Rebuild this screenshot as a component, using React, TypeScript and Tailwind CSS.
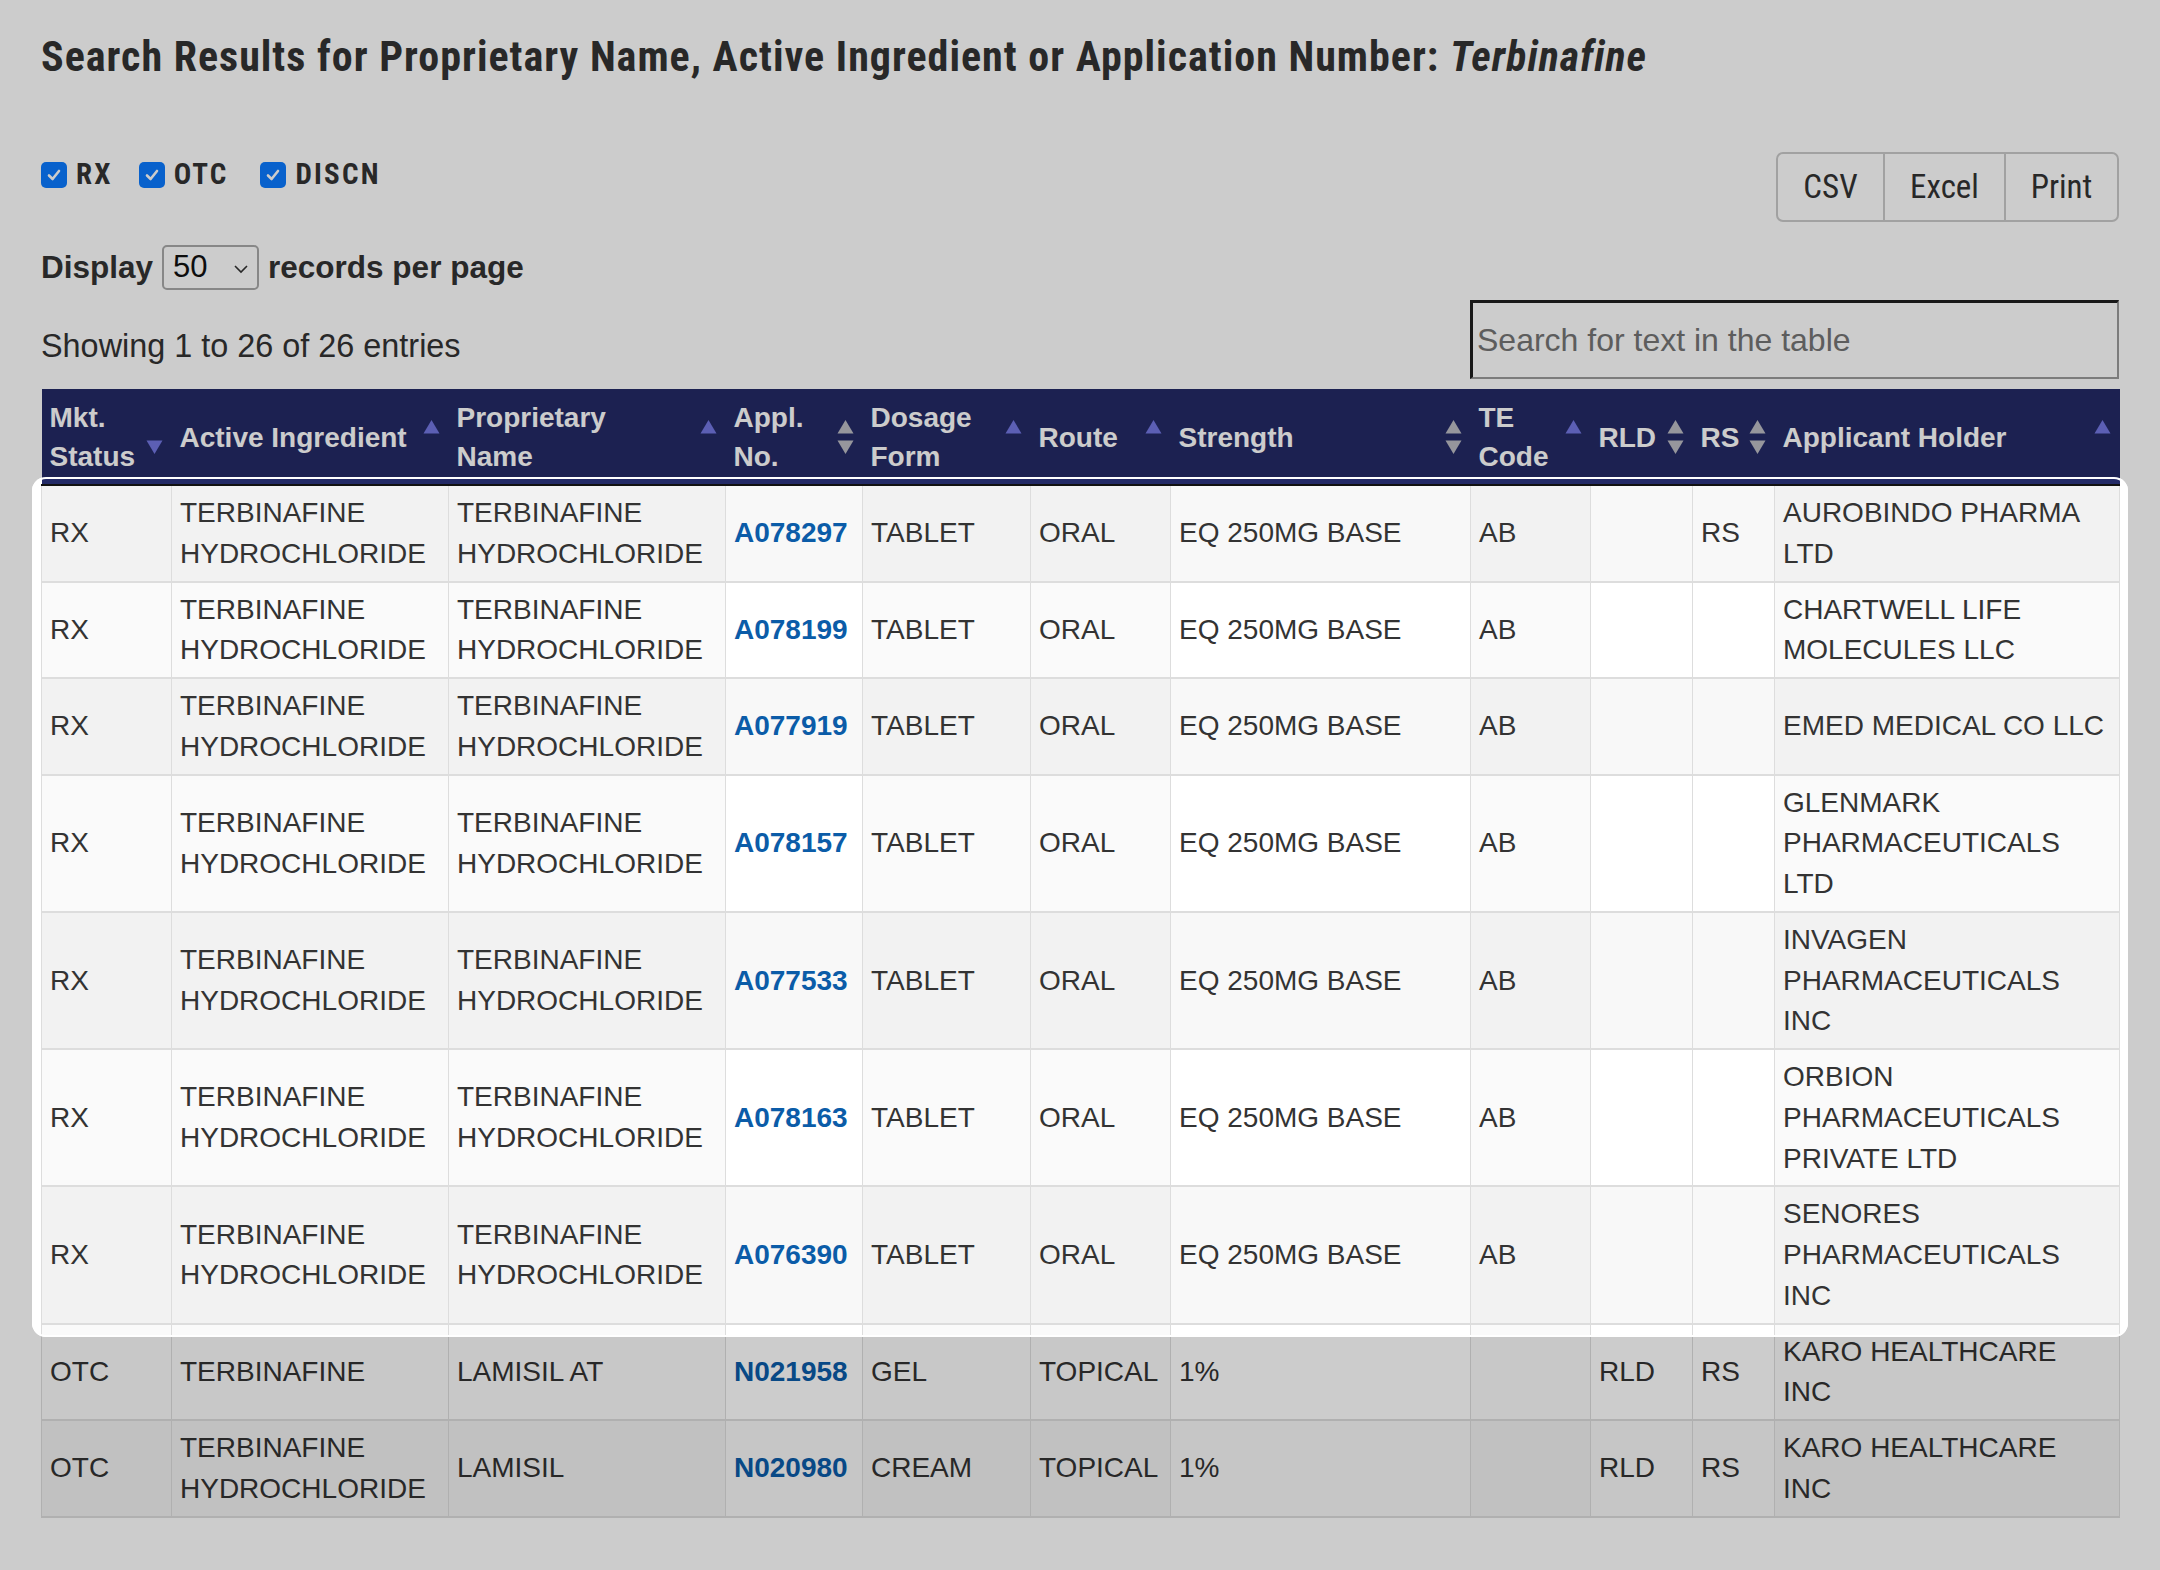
import React from 'react';

const COND = "font-['Roboto_Condensed','Liberation_Sans_Narrow','DejaVu_Sans_Condensed',sans-serif]";

type Sort = 'up' | 'down' | 'both';

function SortIcon({ type }: { type: Sort }) {
  const lav = '#7377e2';
  const grey = '#bcbcc4';
  return (
    <svg
      className="absolute right-[9px] top-1/2 -translate-y-1/2"
      width="17"
      height="36"
      viewBox="0 0 17 36"
    >
      {(type === 'up' || type === 'both') && (
        <polygon points="8.5,1 16.5,14.5 0.5,14.5" fill={type === 'both' ? grey : lav} />
      )}
      {(type === 'down' || type === 'both') && (
        <polygon points="0.5,21.5 16.5,21.5 8.5,35" fill={type === 'both' ? grey : lav} />
      )}
    </svg>
  );
}

function Lines({ lines }: { lines: string[] }) {
  return (
    <>
      {lines.map((l, i) => (
        <React.Fragment key={i}>
          {i > 0 && <br />}
          {l}
        </React.Fragment>
      ))}
    </>
  );
}

function Check({ label, className }: { label: string; className: string }) {
  return (
    <label className={`flex items-center ${className}`}>
      <span className="flex h-[26px] w-[26px] items-center justify-center rounded-[5px] bg-[#0a7aff]">
        <svg width="18" height="18" viewBox="0 0 18 18">
          <path
            d="M4 9.5 L7.6 13 L14 5"
            stroke="white"
            strokeWidth="2.6"
            fill="none"
            strokeLinecap="round"
            strokeLinejoin="round"
          />
        </svg>
      </span>
      <span className={`ml-[9px] text-[29px] font-bold tracking-[2.2px] text-[#333] ${COND}`}>{label}</span>
    </label>
  );
}

const headers: { l: string[]; s: Sort }[] = [
  { l: ['Mkt.', 'Status'], s: 'down' },
  { l: ['Active Ingredient'], s: 'up' },
  { l: ['Proprietary', 'Name'], s: 'up' },
  { l: ['Appl.', 'No.'], s: 'both' },
  { l: ['Dosage', 'Form'], s: 'up' },
  { l: ['Route'], s: 'up' },
  { l: ['Strength'], s: 'both' },
  { l: ['TE', 'Code'], s: 'up' },
  { l: ['RLD'], s: 'both' },
  { l: ['RS'], s: 'both' },
  { l: ['Applicant Holder'], s: 'up' },
];

const colWidths = [
  'w-[130px]',
  'w-[277px]',
  'w-[277px]',
  'w-[137px]',
  'w-[168px]',
  'w-[140px]',
  'w-[300px]',
  'w-[120px]',
  'w-[102px]',
  'w-[82px]',
  'w-[345px]',
];

type Row = {
  ms: string;
  ai: string[];
  pn: string[];
  ap: string;
  df: string;
  rt: string;
  st: string;
  te: string;
  rld: string;
  rs: string;
  ah: string[];
};

const TH = ['TERBINAFINE', 'HYDROCHLORIDE'];

const rows: Row[] = [
  { ms: 'RX', ai: TH, pn: TH, ap: 'A078297', df: 'TABLET', rt: 'ORAL', st: 'EQ 250MG BASE', te: 'AB', rld: '', rs: 'RS', ah: ['AUROBINDO PHARMA', 'LTD'] },
  { ms: 'RX', ai: TH, pn: TH, ap: 'A078199', df: 'TABLET', rt: 'ORAL', st: 'EQ 250MG BASE', te: 'AB', rld: '', rs: '', ah: ['CHARTWELL LIFE', 'MOLECULES LLC'] },
  { ms: 'RX', ai: TH, pn: TH, ap: 'A077919', df: 'TABLET', rt: 'ORAL', st: 'EQ 250MG BASE', te: 'AB', rld: '', rs: '', ah: ['EMED MEDICAL CO LLC'] },
  { ms: 'RX', ai: TH, pn: TH, ap: 'A078157', df: 'TABLET', rt: 'ORAL', st: 'EQ 250MG BASE', te: 'AB', rld: '', rs: '', ah: ['GLENMARK', 'PHARMACEUTICALS', 'LTD'] },
  { ms: 'RX', ai: TH, pn: TH, ap: 'A077533', df: 'TABLET', rt: 'ORAL', st: 'EQ 250MG BASE', te: 'AB', rld: '', rs: '', ah: ['INVAGEN', 'PHARMACEUTICALS', 'INC'] },
  { ms: 'RX', ai: TH, pn: TH, ap: 'A078163', df: 'TABLET', rt: 'ORAL', st: 'EQ 250MG BASE', te: 'AB', rld: '', rs: '', ah: ['ORBION', 'PHARMACEUTICALS', 'PRIVATE LTD'] },
  { ms: 'RX', ai: TH, pn: TH, ap: 'A076390', df: 'TABLET', rt: 'ORAL', st: 'EQ 250MG BASE', te: 'AB', rld: '', rs: '', ah: ['SENORES', 'PHARMACEUTICALS', 'INC'] },
  { ms: 'OTC', ai: ['TERBINAFINE'], pn: ['LAMISIL AT'], ap: 'N021958', df: 'GEL', rt: 'TOPICAL', st: '1%', te: '', rld: 'RLD', rs: 'RS', ah: ['KARO HEALTHCARE', 'INC'] },
  { ms: 'OTC', ai: TH, pn: ['LAMISIL'], ap: 'N020980', df: 'CREAM', rt: 'TOPICAL', st: '1%', te: '', rld: 'RLD', rs: 'RS', ah: ['KARO HEALTHCARE', 'INC'] },
];

const sortedCols = [true, true, true, false, true, true, false, true, false, false, true];

export default function App() {
  return (
    <div className="relative h-[1570px] w-full overflow-hidden bg-white font-['Liberation_Sans',Arial,sans-serif] text-[#333]">
      <div className="px-[41px]">
        <h1 className={`pt-[33px] text-[42px] font-bold leading-[48px] tracking-[1px] text-[#333] ${COND}`}>
          Search Results for Proprietary Name, Active Ingredient or Application Number: <i>Terbinafine</i>
        </h1>

        <div className="mt-[71px] flex h-[70px] items-start justify-between">
          <div className="flex items-center pt-[1px]">
            <Check label="RX" className="mr-[26px]" />
            <Check label="OTC" className="mr-[32px]" />
            <Check label="DISCN" className="" />
          </div>
          <div className={`flex h-[70px] overflow-hidden rounded-[7px] border-2 border-[#cacaca] bg-white text-[33px] text-[#333] ${COND}`}>
            <div className="flex w-[105px] items-center justify-center">CSV</div>
            <div className="flex w-[121px] items-center justify-center border-l-2 border-[#cacaca]">Excel</div>
            <div className="flex w-[113px] items-center justify-center border-l-2 border-[#cacaca]">Print</div>
          </div>
        </div>

        <div className="mt-[23px] flex h-[45px] items-center text-[31.5px] font-bold text-[#333]">
          <span>Display</span>
          <div className="relative ml-[9px] mr-[9px] flex h-[45px] w-[97px] items-center rounded-[5px] border-2 border-[#a9a9a9] bg-white pl-[9px] text-[31px] font-normal text-[#111]">
            50
            <svg className="absolute right-[8px] top-[17px]" width="16" height="10" viewBox="0 0 16 10">
              <path d="M2 2 L8 8 L14 2" stroke="#333" strokeWidth="1.6" fill="none" />
            </svg>
          </div>
          <span>records per page</span>
        </div>

        <div className="mt-[10px] flex h-[79px] items-start justify-between">
          <div className="mt-[26px] text-[32.4px] leading-[40px] text-[#333]">Showing 1 to 26 of 26 entries</div>
          <input
            placeholder="Search for text in the table"
            className="h-[79px] w-[649px] border-b-2 border-l-[3px] border-r-2 border-t-[3px] border-b-[#9b9b9b] border-l-[#1f1f1f] border-r-[#9b9b9b] border-t-[#1f1f1f] bg-white pl-[4px] text-[32px] text-[#333] outline-none placeholder:text-[#757575]"
          />
        </div>

        <table className="mt-[10px] w-[2078px] table-fixed border-collapse text-[28px] leading-[40.75px] text-[#333]">
          <colgroup>
            {colWidths.map((w, i) => (
              <col key={i} className={w} />
            ))}
          </colgroup>
          <thead>
            <tr>
              {headers.map((h, i) => (
                <th
                  key={i}
                  className="relative whitespace-nowrap border-b-2 border-b-[#111111] bg-[#232a66] pb-[8px] pl-[8px] pr-[28px] pt-[9px] text-left align-middle text-[28px] font-bold leading-[39px] text-white"
                >
                  <Lines lines={h.l} />
                  <SortIcon type={h.s} />
                </th>
              ))}
            </tr>
          </thead>
          <tbody>
            {rows.map((r, ri) => {
              const odd = ri % 2 === 0;
              const cells: React.ReactNode[] = [
                r.ms,
                <Lines lines={r.ai} />,
                <Lines lines={r.pn} />,
                <a className="font-bold text-[#0b5ca8]">{r.ap}</a>,
                r.df,
                r.rt,
                r.st,
                r.te,
                r.rld,
                r.rs,
                <Lines lines={r.ah} />,
              ];
              return (
                <tr key={ri}>
                  {cells.map((c, ci) => {
                    const bg = odd
                      ? sortedCols[ci]
                        ? 'bg-[#f2f2f2]'
                        : 'bg-[#f8f8f8]'
                      : sortedCols[ci]
                        ? 'bg-[#fafafa]'
                        : 'bg-white';
                    return (
                      <td
                        key={ci}
                        className={`whitespace-nowrap border border-b-2 border-[#dddddd] px-[8px] pb-[6px] pt-[7px] align-middle ${bg}`}
                      >
                        {c}
                      </td>
                    );
                  })}
                </tr>
              );
            })}
          </tbody>
        </table>
      </div>

      <div className="pointer-events-none absolute left-[32px] top-[477px] z-10 h-[860px] w-[2096px] rounded-[14px] border-2 border-white shadow-[0_0_0_3000px_rgba(0,0,0,0.2)]" />
    </div>
  );
}
